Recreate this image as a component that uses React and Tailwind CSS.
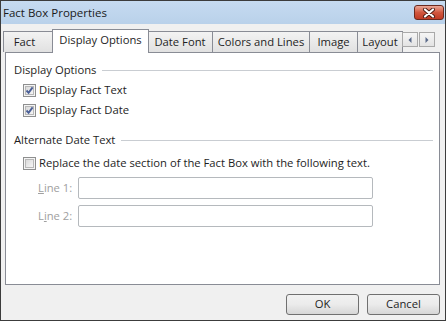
import React from "react";

const Check = ({ checked }) => (
  <svg width="13" height="13" viewBox="0 0 13 13" className="shrink-0">
    <defs>
      <linearGradient id="cbg" x1="0" y1="0" x2="1" y2="1">
        <stop offset="0" stopColor="#d8d8d8" />
        <stop offset="1" stopColor="#f8f8f8" />
      </linearGradient>
    </defs>
    <rect x="0.5" y="0.5" width="12" height="12" fill="#f4f4f4" stroke="#8e8f8f" />
    <rect x="2.5" y="2.5" width="8" height="8" fill="url(#cbg)" stroke="#b8b8b8" />
    {checked && (
      <path d="M3.5 6.5 L5.6 8.8 L9.6 3.4" fill="none" stroke="#4a5f97" strokeWidth="1.9" />
    )}
  </svg>
);

const Tab = ({ label, w, extra = "" }) => (
  <div
    className={`${w} ${extra} h-[21px] -ml-px first:ml-0 flex items-center justify-center border border-b-0 border-[#898c95] bg-gradient-to-b from-[#f3f3f3] to-[#e1e1e1] text-[#1e1e1e]`}
  >
    {label}
  </div>
);

const ArrowBtn = ({ dir }) => (
  <div className="w-[16px] h-[15px] flex items-center justify-center border border-[#a9a9a9] bg-gradient-to-b from-[#f6f6f6] to-[#e3e3e3]">
    <svg width="4" height="6" viewBox="0 0 4 6">
      {dir === "left" ? (
        <path d="M3.5 0 L0.5 3 L3.5 6 Z" fill="#5a6a8a" />
      ) : (
        <path d="M0.5 0 L3.5 3 L0.5 6 Z" fill="#5a6a8a" />
      )}
    </svg>
  </div>
);

const GroupHeader = ({ children }) => (
  <div className="h-[16px] flex items-center gap-[6px]">
    <span className="whitespace-nowrap">{children}</span>
    <div className="flex-1 h-px bg-[#c9cdd2]" />
  </div>
);

const CheckRow = ({ checked, children, className = "" }) => (
  <div className={`h-[16px] pl-[9px] flex items-center gap-[3px] ${className}`}>
    <Check checked={checked} />
    <span className="whitespace-nowrap">{children}</span>
  </div>
);

const Button = ({ children }) => (
  <button className="w-[73px] h-[21px] rounded-[3px] border border-[#707070] bg-gradient-to-b from-[#f2f2f2] via-[#ebebeb] to-[#d6d6d6] text-[#1e1e1e] flex items-center justify-center">
    {children}
  </button>
);

export default function App() {
  return (
    <div
      className="w-[446px] h-[321px] border border-[#3c3c3c] bg-[#f0f0f0] flex flex-col text-[11.25px] text-[#1e1e1e] overflow-hidden"
      style={{ fontFamily: '"Open Sans", "Noto Sans", sans-serif' }}
    >
      {/* Title bar */}
      <div className="h-[23px] shrink-0 flex items-center justify-between pl-[2px] pr-[1px] bg-gradient-to-b from-[#c6dbf1] to-[#b9d1ea]">
        <span className="text-[#1a1a1a] text-[11.5px]">Fact Box Properties</span>
        <div className="w-[30px] h-[15px] rounded-[3px] border border-[#6a2a1f] bg-gradient-to-b from-[#e9a797] via-[#d1573f] to-[#c03a24] flex items-center justify-center">
          <svg width="14" height="10" viewBox="0 0 14 10">
            <path d="M3 1.5 L11 8.5 M11 1.5 L3 8.5" stroke="#4a1c14" strokeWidth="4" strokeLinecap="round" />
            <path d="M3 1.5 L11 8.5 M11 1.5 L3 8.5" stroke="#ffffff" strokeWidth="2.2" strokeLinecap="round" />
          </svg>
        </div>
      </div>

      {/* Body */}
      <div className="flex-1 flex flex-col pl-[2px] pr-[5px] pt-[6px]">
        {/* Tabs */}
        <div className="h-[22px] flex items-end">
          <Tab label="Fact" w="w-[51px]" extra="pr-[8px]" />
          <div className="w-[97px] h-[24px] -ml-[2px] -mr-[1px] mb-[-1px] z-10 relative flex items-start pt-[2px] justify-center border border-b-0 border-[#898c95] bg-white">
            Display Options
          </div>
          <Tab label="Date Font" w="w-[66px]" />
          <Tab label="Colors and Lines" w="w-[98px]" />
          <Tab label="Image" w="w-[49px]" />
          <Tab label="Layout" w="w-[46px]" />
          <div className="self-start mt-[2px] -ml-[1px] flex gap-px">
            <ArrowBtn dir="left" />
            <ArrowBtn dir="right" />
          </div>
        </div>

        {/* Panel */}
        <div className="ml-[2px] h-[233px] border border-[#898c95] bg-white flex flex-col pl-[8px] pr-[6px] pt-[9px]">
          <GroupHeader>Display Options</GroupHeader>
          <CheckRow checked className="mt-[4px]">Display Fact Text</CheckRow>
          <CheckRow checked className="mt-[4px]">Display Fact Date</CheckRow>

          <div className="mt-[14px]">
            <GroupHeader>Alternate Date Text</GroupHeader>
          </div>
          <CheckRow className="mt-[7px]">
            Replace the date section of the Fact Box with the following text.
          </CheckRow>

          <div className="mt-[6px] ml-[24px] flex items-center">
            <span className="w-[40px] text-[#a0a0a0] whitespace-nowrap">
              <span className="underline">L</span>ine 1:
            </span>
            <div className="w-[295px] h-[22px] border border-[#b5b9bd] rounded-[2px] bg-white" />
          </div>
          <div className="mt-[6px] ml-[24px] flex items-center">
            <span className="w-[40px] text-[#a0a0a0] whitespace-nowrap">
              L<span className="underline">i</span>ne 2:
            </span>
            <div className="w-[295px] h-[22px] border border-[#b5b9bd] rounded-[2px] bg-white" />
          </div>
        </div>

        {/* Buttons */}
        <div className="flex justify-end gap-[8px] pt-[9px]">
          <Button>OK</Button>
          <Button>Cancel</Button>
        </div>
      </div>
    </div>
  );
}
